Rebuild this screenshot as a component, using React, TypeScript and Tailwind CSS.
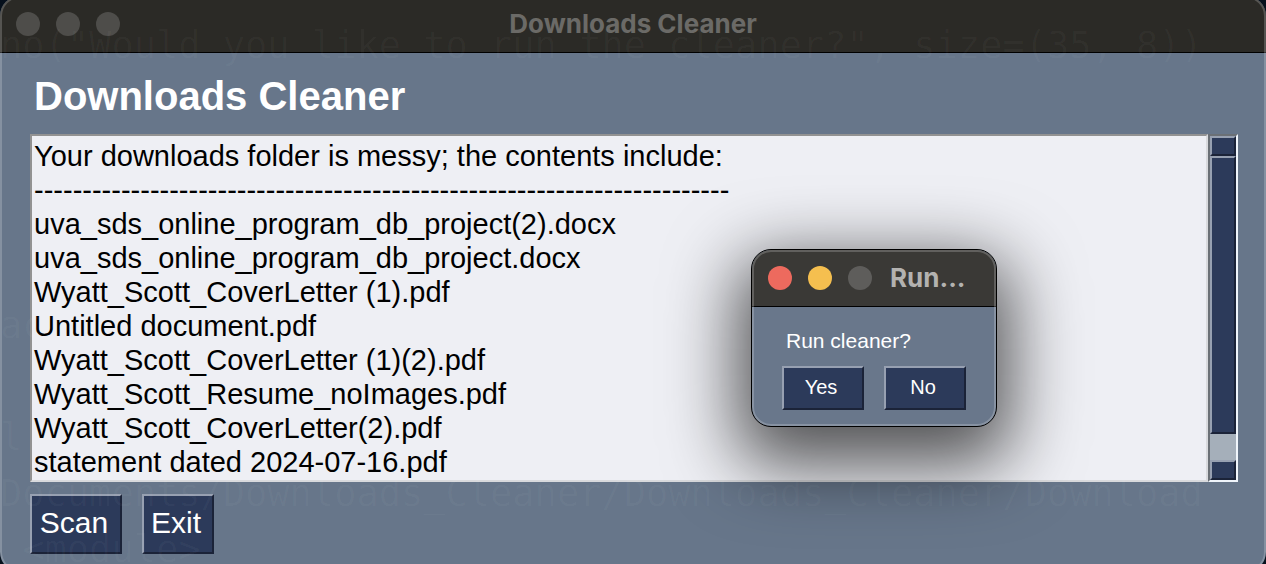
import { useState } from "react";

const report = [
  "Your downloads folder is messy; the contents include:",
  "-".repeat(72),
  "uva_sds_online_program_db_project(2).docx",
  "uva_sds_online_program_db_project.docx",
  "Wyatt_Scott_CoverLetter (1).pdf",
  "Untitled document.pdf",
  "Wyatt_Scott_CoverLetter (1)(2).pdf",
  "Wyatt_Scott_Resume_noImages.pdf",
  "Wyatt_Scott_CoverLetter(2).pdf",
  "statement dated 2024-07-16.pdf",
].join("\n");

// Terminal output that shows faintly through the translucent window.
const terminalLines = [
  'no("Would you like to run the cleaner?", size=(35, 8))',
  "",
  "",
  "",
  "",
  "ac         Downloads_Cleaner % python3 Downloads_Clean",
  "",
  "l   last):",
  "Documents/Downloads_Cleaner/Downloads_Cleaner/Download",
  " <module>",
].join("\n");

const bevel =
  "border-2 border-t-[#97a0b1] border-l-[#97a0b1] border-r-[#1b2338] border-b-[#1b2338] bg-[#2c3a5a] text-white";

function Lights({ colors }: { colors: string[] }) {
  return (
    <div className="flex gap-4">
      {colors.map((color, i) => (
        <span key={i} className={`size-6 rounded-full ${color}`} />
      ))}
    </div>
  );
}

function ScrollBar() {
  return (
    <div className="flex w-[30px] flex-col border-2 border-t-[#6b7076] border-l-[#6b7076] border-r-[#f0f5fb] border-b-[#f0f5fb] bg-[#a5afba]">
      <button type="button" aria-label="Scroll up" className={`h-5 ${bevel}`} />
      <div className={`h-[278px] ${bevel}`} />
      <div className="flex-1" />
      <button type="button" aria-label="Scroll down" className={`h-5 ${bevel}`} />
    </div>
  );
}

function Dialog({ onClose }: { onClose: () => void }) {
  return (
    <section
      role="dialog"
      aria-label="Run cleaner"
      className="absolute top-[249px] left-[751px] w-[246px] overflow-hidden rounded-[20px] border border-black bg-[#69778b] shadow-[0_24px_70px_14px_rgba(0,0,0,0.66)]"
    >
      <header className="flex h-[57px] items-center gap-[18px] border-b border-black bg-[#3a3936] pl-4">
        <Lights colors={["bg-[#ed6a5e]", "bg-[#f5bf4f]", "bg-[#5e5d5b]"]} />
        <span className="pb-0.5 font-[Inter,sans-serif] text-[26px] font-bold text-[#b3b2b0]">Run...</span>
      </header>
      <div className="flex flex-col gap-[13px] px-[30px] pt-[22px] pb-4">
        <p className="pl-1 text-[21px] leading-6 text-white">Run cleaner?</p>
        <div className="flex gap-5">
          <button type="button" onClick={onClose} className={`h-11 w-[82px] pr-1 pb-0.5 text-[20px] ${bevel}`}>
            Yes
          </button>
          <button type="button" onClick={onClose} className={`h-11 w-[82px] pr-1 pb-0.5 text-[20px] ${bevel}`}>
            No
          </button>
        </div>
      </div>
      <div className="pointer-events-none absolute inset-0 rounded-[19px] border-2 border-white/20" />
    </section>
  );
}

export default function App() {
  const [asking, setAsking] = useState(true);
  return (
    <div className="relative h-screen overflow-hidden bg-[#06101c] font-['Liberation_Sans',Arial,sans-serif]">
      <main className="relative -mt-1 flex h-[calc(100vh+12px)] flex-col overflow-hidden rounded-[20px] bg-[#67768a]">
        <header className="flex h-[57px] shrink-0 items-center border-b border-black bg-[#2b2a26] px-4">
          <div className="flex-1">
            <Lights colors={["bg-[#4e4d4a]", "bg-[#4e4d4a]", "bg-[#4e4d4a]"]} />
          </div>
          <span className="pb-0.5 font-[Inter,sans-serif] text-[26px] font-bold text-[#6b6a67]">Downloads Cleaner</span>
          <div className="flex-1" />
        </header>
        <div className="flex flex-col gap-3 px-7 pt-[19px] pl-[30px]">
          <h1 className="pb-px pl-1 text-[40px] leading-[49px] font-bold text-white">Downloads Cleaner</h1>
          <div className="flex">
            <textarea
              readOnly
              aria-label="Report"
              value={report}
              rows={10}
              className="block flex-1 resize-none overflow-hidden border-2 border-t-[#929292] border-l-[#929292] border-r-[#d9dadd] border-b-[#d9dadd] bg-[#eeeff4] px-0.5 pt-[3px] pb-px text-[29px] leading-[34px] text-black outline-none"
            />
            <ScrollBar />
          </div>
          <div className="flex gap-5">
            <button
              type="button"
              onClick={() => setAsking(true)}
              className={`h-[60px] w-[92px] pr-1 pb-1 text-[30px] ${bevel}`}
            >
              Scan
            </button>
            <button type="button" className={`h-[60px] w-[72px] pr-1 pb-1 text-[30px] ${bevel}`}>
              Exit
            </button>
          </div>
        </div>
        <div className="pointer-events-none absolute inset-0 rounded-[20px] border-2 border-white/20" />
      </main>
      <pre
        aria-hidden="true"
        className="pointer-events-none absolute top-[18px] left-0 font-['DejaVu_Sans_Mono',monospace] text-[37px] leading-[56px] text-white/3"
      >
        {terminalLines}
      </pre>
      {asking && <Dialog onClose={() => setAsking(false)} />}
    </div>
  );
}
